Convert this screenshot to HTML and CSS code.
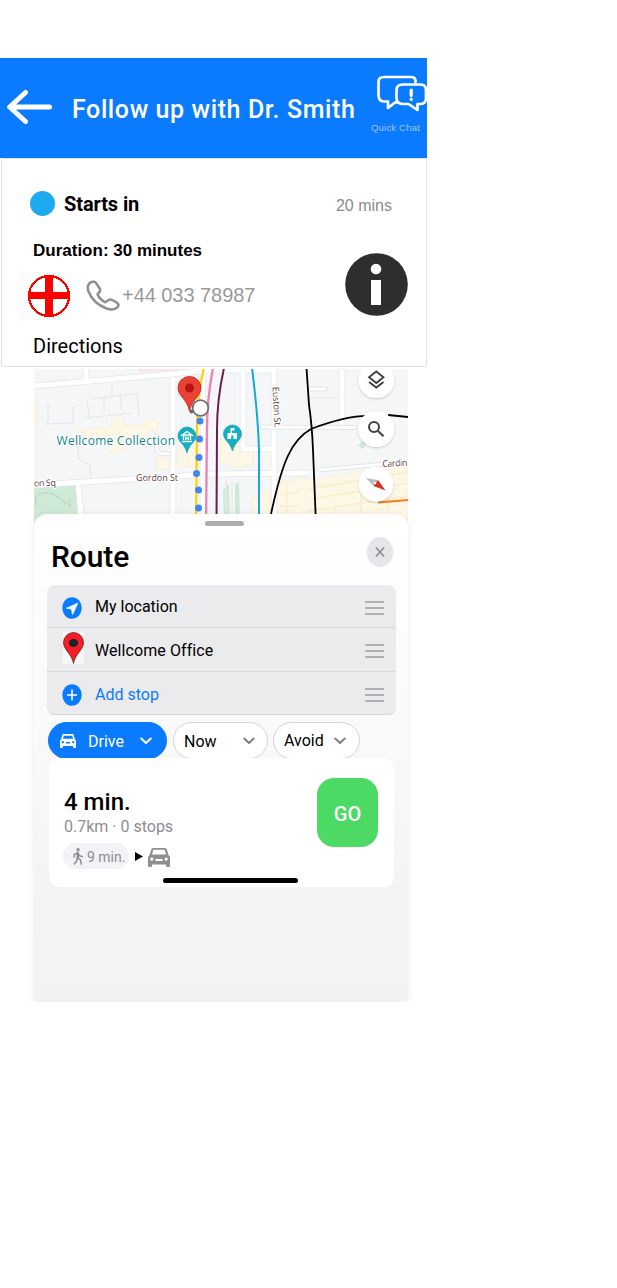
FILE: index.html
```html
<!DOCTYPE html>
<html lang="en">
<head>
<meta charset="utf-8">
<title>Follow up with Dr. Smith</title>
<link rel="stylesheet" href="styles.css">
</head>
<body>
<main class="phone">
  <header class="topbar">
    <svg class="back" width="46" height="36" viewBox="0 0 46 36" fill="none" stroke="#fff" stroke-width="5" stroke-linecap="round" stroke-linejoin="round"><path d="M18.500 3.500 2.700 18 18.500 32.500M4 18H42.500"/></svg>
    <h1 class="title">Follow up with Dr. Smith</h1>
    <div class="chat">
      <svg width="52" height="38" viewBox="376 74 52 38" fill="none" stroke="#fff" stroke-width="2.700" stroke-linejoin="round" stroke-linecap="round"><path d="M415.500 82V81Q415.500 77 411 77H384Q378.500 77 378.500 82V95Q378.500 101.500 384 101.500H388V108L395 102.500H397"/><path d="M403 84.500H420Q426 84.500 426 90V98Q426 103.500 421 104H417.500V110L408.500 104H402.500Q396.500 103.500 396.500 98V90Q396.500 84.500 403 84.500Z"/><path d="M411.200 90V95.500M411.200 99.200V99.400" stroke-width="3.200"/></svg>
      <span class="chat-label">Quick Chat</span>
    </div>
  </header>

  <section class="card">
    <div class="starts">
      <span class="dot"></span>
      <span class="starts-label">Starts in</span>
      <span class="starts-time">20 mins</span>
    </div>
    <div class="details">
      <div class="details-main">
        <div class="duration">Duration: 30 minutes</div>
        <div class="contact">
          <svg width="42" height="42" viewBox="0 0 42 42" shape-rendering="crispEdges"><circle cx="21" cy="21" r="20" fill="#fff" stroke="#f00" stroke-width="2"/><path d="M17 1H25V17H41V24H25V41H17V24H1V17H17Z" fill="#f00"/></svg>
          <svg class="handset" width="34" height="32" viewBox="86 280 34 32" fill="none" stroke="#8e8e93" stroke-width="2.500" stroke-linejoin="round"><path d="M90.500 282.500C93 280.800 95.500 281.800 96.700 284L99.700 288.500C101 290.700 99.500 292.500 97.800 293.800C96.500 295 101.800 300.800 105 302.200C106.500 303 107.500 299.300 110.500 299.400C112 299.500 113.700 301 115.500 301.800C118.500 303.500 119.400 305 117.500 307.200C114.500 310.200 110.500 309.800 106.500 308.500C98 305.200 91.500 299 88.500 291.500C87.200 288 88 284.300 90.500 282.500Z"/></svg>
          <span class="phone-number">+44 033 78987</span>
        </div>
      </div>
      <svg class="info" width="63" height="63" viewBox="0 0 63 63"><circle cx="31.500" cy="31.500" r="31.300" fill="#2e2e2e"/><circle cx="31" cy="16" r="5.300" fill="#fff"/><path d="M26 27H36V52H26Z" fill="#fff"/></svg>
    </div>
    <h2 class="directions">Directions</h2>
  </section>

  <section class="navigator">
    <svg class="map" width="374" height="155" viewBox="34 369 374 155">
      <defs><filter id="lift" x="-30%" y="-30%" width="160%" height="160%"><feDropShadow dx="0" dy="1" stdDeviation="1" flood-opacity=".2"/></filter></defs>
      <path fill="#f5f6f8" d="M34 369H408V524H34Z"/>
      <path fill="#fbe6e8" d="M138 369H185V371L138 372Z"/>
      <path fill="#ceead6" d="M34 485 76 483 78 524H34ZM223 490 229 484 230 524H224ZM235 484 239 482 240 524H235ZM363 440 367 443 363 449 358 446Z"/>
      <g fill="#fdf7e6" stroke="#f9edcf" stroke-width=".8"><path d="M76 431 112 427V419H124V427L147 424V420H158V430L148 431V437L125 439V451H109V439L84 437V433Z"/><path d="M178 448H196V466H178ZM156 458H169V469H156ZM221 438 236 442 253 449V464L237 468 220 462ZM34 403H37V424H34Z"/><path d="M252 498 270 490V517H252ZM278 484 300 477 314 480 408 463V520H276Z"/></g>
      <g fill="none" stroke="#fbedc9" stroke-width="1.500"><path d="M310 489 408 472M311 499 408 483M308 511 408 496M335 514V504M361 514V480M388 510V490M280 495 300 491M280 506H298M287 484V514"/></g>
      <g fill="none" stroke="#e3e5e7" stroke-width="6.500"><path d="M34 386 172 374 219 369M34 485 164 477 214 474 310 473M86 369V380M173 377V524M78 482 81 514M203 369V514M220 370H274V514M342 370V427M243 370V449H276"/></g>
      <g fill="none" stroke="#fff" stroke-width="5"><path d="M34 386 172 374 219 369M34 485 164 477 214 474 310 473M86 369V380M173 377V524M78 482 81 514M203 369V514M220 370H274V514M342 370V427M243 370V449H276"/></g>
      <g fill="none" stroke="#dddfe3" stroke-width="4.600" stroke-linecap="round"><path d="M319 470 406 462M157 436V451Q158 454 169 454M262 427 355 427.500M310 389H326"/></g>
      <g fill="none" stroke="#fff" stroke-width="3" stroke-linecap="round"><path d="M319 470 406 462M157 436V451Q158 454 169 454M262 427 355 427.500M310 389H326"/></g>
      <g fill="none" stroke="#e6e7ea" stroke-width="1.200"><path d="M90 399 137 394 139 418M87 401 90 419M86 418 132 413M104 396V411M121 395V410M112 384V396M48 402V424M73 407V423L44 424M77 438 79 459 90 465 91 477M310 398H338M232 482V514M226 478V514"/><path stroke="#b8dabf" d="M36 505Q33 496 42 493Q52 491 60 499L71 506M70 499V508"/></g>
      <g fill="none"><path stroke="#fdd20d" stroke-width="2.300" d="M204 368Q197 394 197 430L196 524"/><path stroke="#e983ba" stroke-width="2.300" d="M213 368Q207 399 207 430L206 524"/><path stroke="#6c1c52" stroke-width="2" d="M224 368Q217 399 217 430L216.500 524"/><path stroke="#16a5dc" stroke-width="2" d="M252 368Q258 415 259 450V524"/><path stroke="#000" stroke-width="1.800" d="M306.500 368 309 405Q312 425 313 450L316 524M271 514C282 463 291 440 311 429Q348 415 371 416M388 415 408 417"/><path stroke="#f47b20" stroke-width="2" d="M378 502.500 408 500"/></g>
      <g fill="#4285f4"><circle cx="200" cy="421" r="3.500"/><circle cx="199.500" cy="439" r="3.500"/><circle cx="199" cy="457.500" r="3.500"/><circle cx="196.500" cy="473.500" r="3.500"/><circle cx="198.500" cy="490" r="3.500"/><circle cx="198.500" cy="508" r="3.500"/></g>
      <path fill="#ea4335" stroke="#c5221f" stroke-width=".8" d="M189.500 411C187 399 178 396 178 388A11.500 11.500 0 0 1 201 388C201 396 191.500 400 189.500 411Z"/><circle cx="189.500" cy="388" r="4.500" fill="#b31412"/><circle cx="191.500" cy="411.500" r="2" fill="#666"/><circle cx="200.500" cy="408" r="7.800" fill="#fff" stroke="#707070" stroke-width="1.800"/>
      <g fill="#12b0c4" stroke="#0b96a8" stroke-width=".6"><path d="M187 453C185 444 178 442 178 436A9 9 0 0 1 196 436C196 442 189 444 187 453Z"/><path d="M232.500 451C230 442 223.500 440 223.500 434A9 9 0 0 1 241.500 434C241.500 440 234.500 442 232.500 451Z"/></g>
      <path fill="none" stroke="#fff" stroke-width="1.300" d="M182 435H192L187 431.500ZM183.500 435V440M190.500 435V440M182 441.500H192M185.800 436.500V440M188.300 436.500V440M186 438.300H188"/>
      <path fill="#fff" d="M227.500 433H230.500V428H234.500V430.500H232V433H237V439H227.500Z"/><path fill="#12b0c4" d="M231.200 435.500H233.500V439H231.200Z"/>
      <g class="map-text" stroke="#fff" stroke-width="2" paint-order="stroke"><text class="poi" x="56.500" y="445" textLength="118.500">Wellcome Collection</text><text x="136" y="480.500" textLength="42">Gordon St</text><text x="34" y="486.500" textLength="22" transform="rotate(-2 34 486)">on Sq</text><text x="382.500" y="467" textLength="25" transform="rotate(-3 382 467)">Cardin</text><text transform="translate(272.500 387) rotate(87)" textLength="41">Euston St.</text></g>
      <g fill="#fff" filter="url(#lift)"><circle cx="376.300" cy="380" r="18"/><circle cx="376.300" cy="429" r="18"/><circle cx="376" cy="484" r="17.500"/></g>
      <path fill="none" stroke="#3c4043" stroke-width="1.800" d="M376.300 371.500 383.500 377.200 376.300 383 369 377.200ZM369 382 376.300 387.500 383.500 382"/>
      <g fill="none" stroke="#3c4043" stroke-width="2"><circle cx="374" cy="427" r="5"/><path d="M377.800 430.800 383.500 436.300"/></g>
      <path fill="#b9bcc0" d="M366 478 378 480 373.500 486Z"/><path fill="#d93025" d="M378 480 385.500 490.500 373.500 486Z"/><circle cx="375" cy="483" r="1.300" fill="#fff"/>
    </svg>

    <div class="sheet">
      <div class="grabber"></div>
      <div class="sheet-head">
        <h2 class="route-title">Route</h2>
        <button class="close" aria-label="Close"><svg width="10" height="12" viewBox="0 0 10 12" fill="none" stroke="#8a8a8f" stroke-width="1.700"><path d="M1 1.500 9 10.500M9 1.500 1 10.500"/></svg></button>
      </div>
      <ul class="stops">
        <li class="stop">
          <svg class="stop-icon" width="20" height="22" viewBox="0 0 20 22"><ellipse cx="10" cy="11" rx="9.700" ry="10.800" fill="#0a7aff"/><path d="M15.800 6.200 4.500 11.200 9.500 12 10.500 17.500Z" fill="#fff" stroke="#fff" stroke-width=".8" stroke-linejoin="round"/></svg>
          <span>My location</span>
          <svg class="handle" width="19" height="14" viewBox="0 0 19 14" stroke="#b0b0b4" stroke-width="1.800"><path d="M0 1H19M0 7H19M0 13H19"/></svg>
        </li>
        <li class="stop">
          <svg class="pin" width="21" height="32" viewBox="0 0 21 32"><path fill="#f6f6f7" d="M0 0H21V32H0Z"/><path fill="#f51c25" stroke="#51181b" stroke-width=".7" d="M10.500 31.500C9 22 .5 18 .5 10.500A10 10 0 0 1 20.500 10.500C20.500 18 12 22 10.500 31.500Z"/><ellipse cx="10.500" cy="11" rx="4.600" ry="4" fill="#17242d"/></svg>
          <span class="stop-name">Wellcome Office</span>
          <svg class="handle" width="19" height="14" viewBox="0 0 19 14" stroke="#b0b0b4" stroke-width="1.800"><path d="M0 1H19M0 7H19M0 13H19"/></svg>
        </li>
        <li class="stop stop-add">
          <svg class="stop-icon" width="20" height="22" viewBox="0 0 20 22"><ellipse cx="10" cy="11" rx="9.700" ry="10.800" fill="#0a7aff"/><path d="M5 11H15M10 5.500V16.500" stroke="#fff" stroke-width="1.600"/></svg>
          <span>Add stop</span>
          <svg class="handle" width="19" height="14" viewBox="0 0 19 14" stroke="#b0b0b4" stroke-width="1.800"><path d="M0 1H19M0 7H19M0 13H19"/></svg>
        </li>
      </ul>
      <div class="chips">
        <button class="chip chip-drive">
          <svg width="16" height="14" viewBox="0 0 22 19" fill="currentColor"><path fill-rule="evenodd" d="M5 0H17Q18.500 0 19 2L20.500 7Q22 8 22 10V18Q22 19 21 19H19Q18 19 18 18V16.500H4V18Q4 19 3 19H1Q0 19 0 18V10Q0 8 1.500 7L3 2Q3.500 0 5 0ZM5.300 2.200 4 6.500H18L16.700 2.200ZM3.800 9.500A1.600 1.600 0 1 0 3.900 12.700A1.600 1.600 0 1 0 3.800 9.500ZM18.200 9.500A1.600 1.600 0 1 0 18.300 12.700A1.600 1.600 0 1 0 18.200 9.500ZM8 11V13H14V11Z"/></svg>
          <span>Drive</span>
          <svg class="chevron" width="12" height="8" viewBox="0 0 12 8" fill="none" stroke="#fff" stroke-width="2" stroke-linecap="round" stroke-linejoin="round"><path d="M1.200 1.500 6 6 10.800 1.500"/></svg>
        </button>
        <button class="chip chip-now"><span>Now</span><svg class="chevron" width="12" height="8" viewBox="0 0 12 8" fill="none" stroke="#7a7a7e" stroke-width="1.800" stroke-linecap="round" stroke-linejoin="round"><path d="M1.200 1.500 6 6 10.800 1.500"/></svg></button>
        <button class="chip chip-avoid"><span>Avoid</span><svg class="chevron" width="12" height="8" viewBox="0 0 12 8" fill="none" stroke="#7a7a7e" stroke-width="1.800" stroke-linecap="round" stroke-linejoin="round"><path d="M1.200 1.500 6 6 10.800 1.500"/></svg></button>
      </div>
      <div class="summary">
        <div class="summary-body">
          <div>
            <div class="eta">4 min.</div>
            <div class="distance">0.7km · 0 stops</div>
            <div class="legs">
              <span class="walk"><svg width="10" height="17" viewBox="0 0 10 17" fill="none" stroke="#8e8e93" stroke-width="1.500" stroke-linecap="round" stroke-linejoin="round"><circle cx="5" cy="1.800" r="1.700" fill="#8e8e93" stroke="none"/><path d="M5 5V10L7.500 12 8.300 16M4.500 10 3.700 13 1.300 16M1.200 9V6.500L5 5 6.500 7.800 9.200 8.500"/><path d="M4.800 5V10" stroke-width="2.500"/></svg><span class="walk-time">9 min.</span></span>
              <svg width="8" height="9" viewBox="0 0 8 9"><path d="M0 0 8 4.500 0 9Z"/></svg>
              <svg class="car" width="22" height="19" viewBox="0 0 22 19" fill="#8e8e93"><path fill-rule="evenodd" d="M5 0H17Q18.500 0 19 2L20.500 7Q22 8 22 10V18Q22 19 21 19H19Q18 19 18 18V16.500H4V18Q4 19 3 19H1Q0 19 0 18V10Q0 8 1.500 7L3 2Q3.500 0 5 0ZM5.300 1.800 4 6.500H18L16.700 1.800ZM3.800 9.500A1.600 1.600 0 1 0 3.900 12.700A1.600 1.600 0 1 0 3.800 9.500ZM18.200 9.500A1.600 1.600 0 1 0 18.300 12.700A1.600 1.600 0 1 0 18.200 9.500ZM7.500 11V13H14.500V11Z"/></svg>
            </div>
          </div>
          <button class="go">GO</button>
        </div>
        <div class="home-bar"></div>
      </div>
    </div>
  </section>
</main>
</body>
</html>
```
FILE: styles.css
```css
* { box-sizing: border-box; }
body { margin: 0; background: #fff; color: #000; font-family: Roboto, sans-serif; }
h1, h2, ul { margin: 0; padding: 0; font-weight: 400; }
button { border: 0; padding: 0; font: inherit; }
svg { display: block; flex: none; }
.phone { width: 427px; padding-top: 58px; }

.topbar { display: flex; height: 100px; padding-left: 7px; background: #0a7aff; color: #fff; overflow: hidden; }
.back { margin-top: 31px; }
.title { margin: 37px 0 0 19px; width: 299px; flex: none; font-size: 25px; line-height: 30px; font-weight: 500; letter-spacing: .6px; white-space: nowrap; }
.chat { padding-top: 16px; flex: none; width: 56px; }
.chat svg { margin-left: 5px; }
.chat-label { display: block; margin-top: 10px; font: 9.500px/12px "Liberation Sans", sans-serif; color: #9fc9ff; white-space: nowrap; letter-spacing: .2px; }

.card { display: flex; flex-direction: column; height: 209px; margin-left: 1px; padding-top: 31px; border: 1px solid #e2e2e2; border-radius: 2px; }
.starts { display: flex; align-items: center; height: 26px; padding: 0 34px 0 28px; }
.dot { width: 25px; height: 25px; border-radius: 50%; background: #1eaaf1; }
.starts-label { margin-left: 9px; padding-top: 1px; font-size: 20px; line-height: 24px; font-weight: 700; letter-spacing: -.1px; }
.starts-time { margin-left: auto; padding-top: 5px; font: 16px/18px "Liberation Sans", sans-serif; color: #8a8a8e; }
.details { display: flex; justify-content: space-between; height: 101px; padding: 24px 18px 0 26px; }
.duration { margin-left: 5px; font: 700 17px/20px "Liberation Sans", sans-serif; }
.details-main { padding-top: 1px; }
.contact { display: flex; align-items: center; margin-top: 14px; }
.handset { margin-left: 16px; }
.phone-number { margin-left: 2px; padding-bottom: 2px; font: 20px/24px "Liberation Sans", sans-serif; letter-spacing: -.05px; color: #999; }
.info { margin-top: 13px; }
.directions { padding: 17px 0 0 31px; font-size: 20px; line-height: 24px; }

.navigator { width: 374px; margin: 2px 0 0 34px; }
.map-text { font-family: "Open Sans", sans-serif; font-size: 9px; fill: #5b3a38; }
.poi { font-size: 12px; font-weight: 500; fill: #12858d; }
.sheet { position: relative; height: 488px; margin-top: -10px; padding: 7px 14px 0; border-radius: 13px 13px 3px 3px; background: linear-gradient(#fff, #fafafa 40%, #f4f4f4 75%, #f2f2f2); box-shadow: 0 1px 9px rgba(0, 0, 0, .08); }
.grabber { width: 39px; height: 5px; margin-left: 157px; border-radius: 3px; background: #adadb1; }
.sheet-head { display: flex; justify-content: space-between; height: 59px; padding: 11px 1px 0 3px; }
.route-title { padding-top: 2px; font-size: 30px; line-height: 36px; font-weight: 500; letter-spacing: -.1px; }
.close { display: grid; place-items: center; width: 26px; height: 30px; border-radius: 50%; background: #e5e5ea; }
.stops { width: 349px; height: 130px; margin-left: -1px; border-radius: 8px; background: #ebebed; border-bottom: 1px solid #d3d3d9; list-style: none; }
.stop { display: flex; align-items: center; height: 43px; padding: 3px 12px 0 15px; border-bottom: 1px solid #d7d7dc; font-size: 16px; line-height: 20px; }
.stop + .stop { height: 44px; padding-top: 2px; }
.stop-add { border: 0; color: #0a7aff; }
.stop-icon { margin-right: 13px; }
.stop span { padding-bottom: 1px; }
.stop .stop-name { padding-bottom: 0; letter-spacing: .08px; }
.pin { margin: 0 11px 5px 1px; }
.stop .handle { margin-left: auto; }
.chips { display: flex; width: 350px; height: 36px; margin-top: 7px; }
.chip { display: flex; align-items: center; height: 37px; border: 1px solid #d4d4d6; border-radius: 19px; background: #fff; color: #000; font-size: 16px; }
.chip-drive { width: 119px; padding: 0 14px 0 11px; border-color: #0a7aff; background: #0a7aff; color: #fff; }
.chip-drive span, .chip-now span { padding-top: 2px; }
.chip-drive span { margin-left: 12px; }
.chip-now { width: 95px; margin-left: 6px; padding: 0 12px 0 10px; }
.chip-avoid { width: 87px; margin-left: 5px; padding: 0 13px 0 10px; }
.chevron { margin-left: auto; }
.summary { position: relative; width: 345px; height: 129px; margin-left: 1px; border-radius: 11px; background: #fff; }
.summary-body { display: flex; justify-content: space-between; height: 120px; padding: 20px 16px 0 14px; }
.eta { margin: 10px 0 0 1px; font-size: 24px; line-height: 29px; font-weight: 500; }
.distance { margin-left: 1px; font-size: 16px; line-height: 20px; color: #8e8e93; }
.legs { display: flex; align-items: center; margin-top: 6px; }
.walk { display: flex; align-items: center; gap: 4px; width: 66px; height: 26px; margin-right: 6px; padding-left: 10px; border-radius: 13px; background: #f2f2f7; font-size: 14px; color: #8e8e93; white-space: nowrap; }
.walk-time { padding-top: 2px; }
.car { margin: 2px 0 0 5px; }
.go { width: 61px; height: 69px; padding-top: 2px; border-radius: 17px; background: #4cd964; color: #fff; font-size: 20px; font-weight: 500; }
.home-bar { width: 135px; height: 5px; margin-left: 114px; border-radius: 3px; background: #000; }
```
